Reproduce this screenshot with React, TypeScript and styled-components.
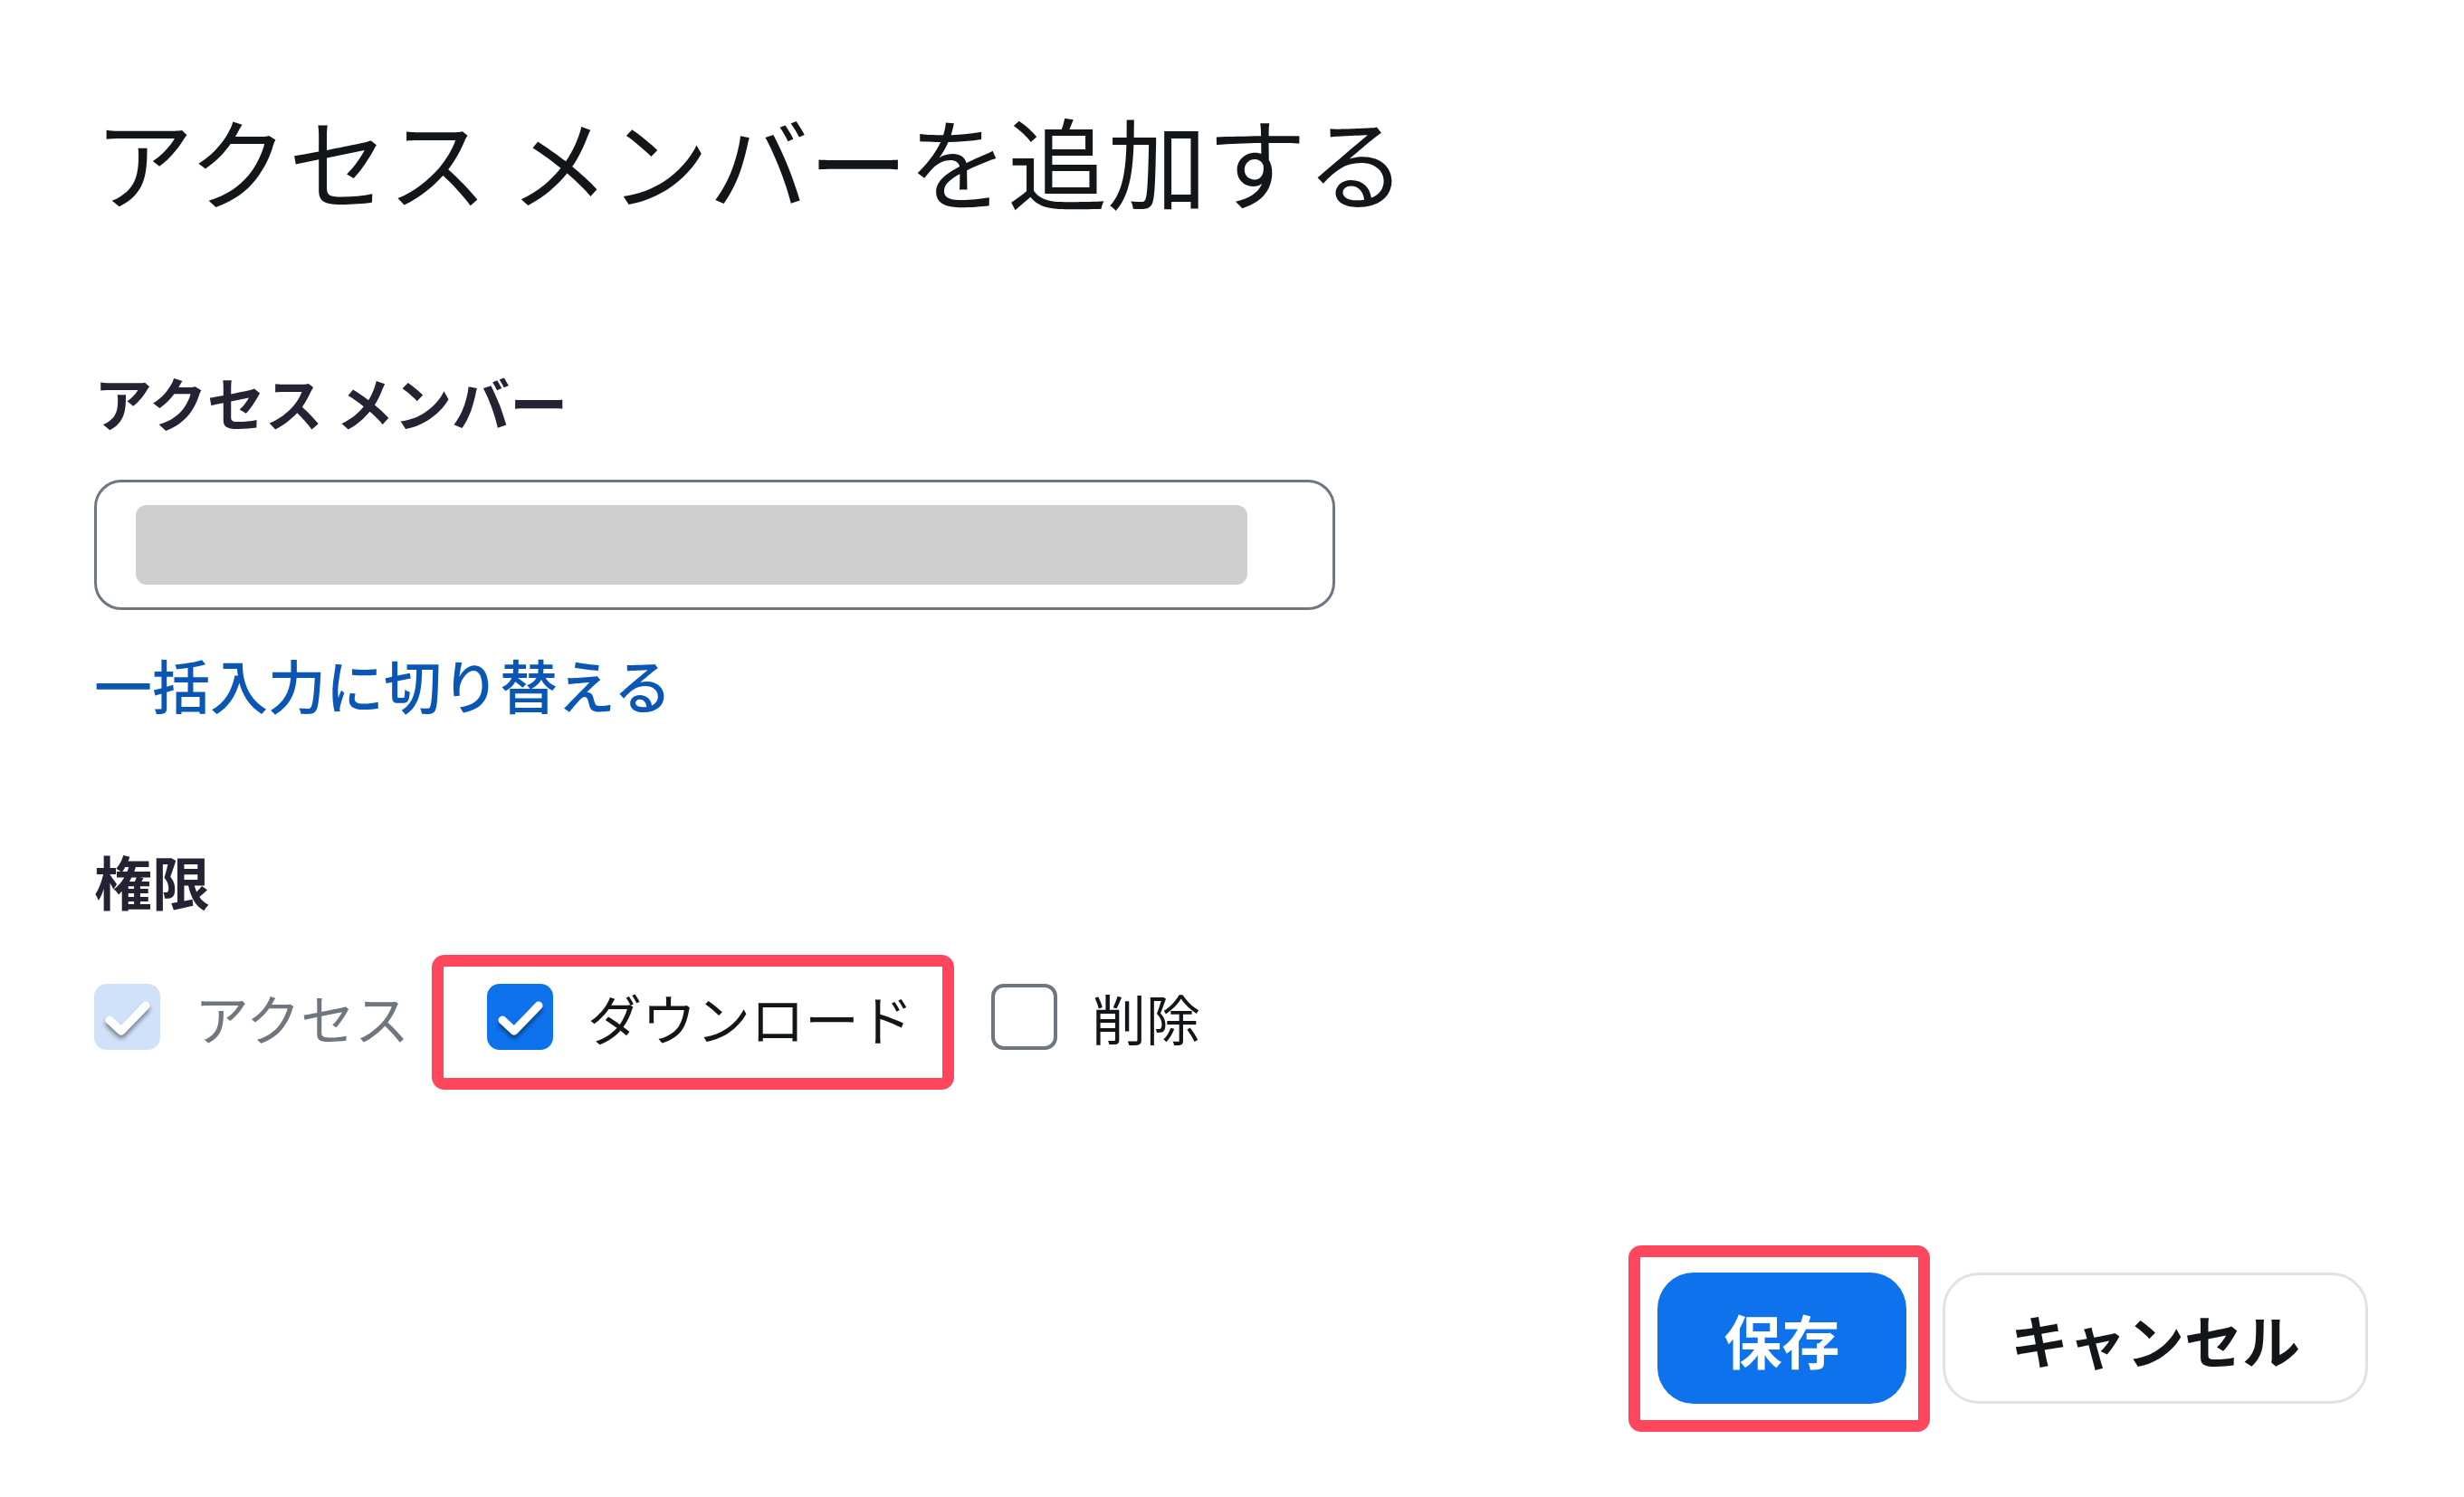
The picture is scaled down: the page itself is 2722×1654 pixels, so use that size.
import React from "react";
import styled, { createGlobalStyle } from "styled-components";

const GlobalStyle = createGlobalStyle`
  html, body {
    margin: 0;
    padding: 0;
    background: #ffffff;
  }
  body {
    font-family: "Noto Sans CJK JP", "Noto Sans", sans-serif;
    color: #131619;
  }
`;

const Page = styled.main`
  width: 2722px;
  min-height: 1654px;
  box-sizing: border-box;
  padding: 110px 106px 0 104px;
  display: flex;
  flex-direction: column;
`;

const Title = styled.h1`
  margin: 0;
  font-size: 110px;
  font-weight: 400;
  line-height: 1.2;
  color: #131619;
  white-space: nowrap;
`;

const SectionLabel = styled.h2<{ $top: number }>`
  margin: ${(p) => p.$top}px 0 0;
  font-size: 64px;
  font-weight: 700;
  line-height: 1.2;
  color: #232333;
`;

const InputBox = styled.div`
  margin-top: 48px;
  width: 1371px;
  height: 144px;
  box-sizing: border-box;
  border: 3px solid #6e7680;
  border-radius: 30px;
  padding: 25px 94px 0 43px;
  background: #ffffff;
`;

const Redacted = styled.div`
  height: 88px;
  border-radius: 12px;
  background: #d0cfd0;
`;

const SwitchLink = styled.a`
  margin-top: 43px;
  align-self: flex-start;
  font-size: 64px;
  font-weight: 500;
  line-height: 1.2;
  color: #0956b5;
  text-decoration: none;
  cursor: pointer;
`;

const Options = styled.div`
  margin-top: 77px;
  display: flex;
  align-items: center;
  gap: 86px;
`;

const Option = styled.label`
  display: flex;
  align-items: center;
  gap: 38px;
  cursor: pointer;
`;

type BoxState = "disabled" | "checked" | "unchecked";

const Box = styled.span<{ $state: BoxState }>`
  width: 73px;
  height: 73px;
  box-sizing: border-box;
  border-radius: 14px;
  display: flex;
  align-items: center;
  justify-content: center;
  flex-shrink: 0;
  background: ${(p) =>
    p.$state === "checked" ? "#0e72ed" : p.$state === "disabled" ? "#d0e2fa" : "#ffffff"};
  border: ${(p) => (p.$state === "unchecked" ? "4px solid #6e7680" : "none")};
`;

const OptionText = styled.span<{ $muted?: boolean }>`
  font-size: 60px;
  font-weight: 400;
  line-height: 1.2;
  color: ${(p) => (p.$muted ? "#6e7680" : "#131619")};
  white-space: nowrap;
`;

const Annotated = styled.span<{ $t: number; $r: number; $b: number; $l: number }>`
  position: relative;
  display: inline-flex;
  &::after {
    content: "";
    position: absolute;
    top: ${(p) => p.$t}px;
    right: ${(p) => p.$r}px;
    bottom: ${(p) => p.$b}px;
    left: ${(p) => p.$l}px;
    border: 13px solid #fe475d;
    border-radius: 14px;
    pointer-events: none;
  }
`;

const Actions = styled.div`
  margin-top: 246px;
  display: flex;
  justify-content: flex-end;
  align-items: center;
  gap: 40px;
`;

const Button = styled.button<{ $primary?: boolean }>`
  height: 145px;
  box-sizing: border-box;
  border-radius: 40px;
  font-family: "Noto Sans CJK JP", "Noto Sans", sans-serif;
  font-size: 64px;
  font-weight: 700;
  line-height: 1;
  cursor: pointer;
  display: flex;
  align-items: center;
  justify-content: center;
  width: ${(p) => (p.$primary ? "275px" : "470px")};
  background: ${(p) => (p.$primary ? "#0e72ed" : "#ffffff")};
  color: ${(p) => (p.$primary ? "#ffffff" : "#131619")};
  border: ${(p) => (p.$primary ? "none" : "3px solid #dfe3e8")};
`;

const Check = () => (
  <svg width="73" height="73" viewBox="0 0 73 73" aria-hidden="true">
    <defs>
      <filter id="chk-shadow" x="-30%" y="-30%" width="160%" height="180%">
        <feDropShadow dx="0" dy="4" stdDeviation="2.5" floodColor="#000" floodOpacity="0.45" />
      </filter>
    </defs>
    <polyline
      points="17,40 30,52 57,24"
      fill="none"
      stroke="#ffffff"
      strokeWidth="9"
      strokeLinecap="round"
      strokeLinejoin="round"
      filter="url(#chk-shadow)"
    />
  </svg>
);

const CheckOption: React.FC<{ state: BoxState; label: string; muted?: boolean }> = ({
  state,
  label,
  muted,
}) => (
  <Option>
    <Box $state={state}>{state !== "unchecked" && <Check />}</Box>
    <OptionText $muted={muted}>{label}</OptionText>
  </Option>
);

export default function App() {
  return (
    <>
      <GlobalStyle />
      <Page>
        <Title>アクセス メンバーを追加する</Title>

        <SectionLabel $top={163}>アクセス メンバー</SectionLabel>
        <InputBox>
          <Redacted />
        </InputBox>
        <SwitchLink>一括入力に切り替える</SwitchLink>

        <SectionLabel $top={140}>権限</SectionLabel>
        <Options>
          <CheckOption state="disabled" label="アクセス" muted />
          <Annotated $t={-32} $r={-45} $b={-44} $l={-61}>
            <CheckOption state="checked" label="ダウンロード" />
          </Annotated>
          <CheckOption state="unchecked" label="削除" />
        </Options>

        <Actions>
          <Annotated $t={-30} $r={-26} $b={-31} $l={-32}>
            <Button $primary>保存</Button>
          </Annotated>
          <Button>キャンセル</Button>
        </Actions>
      </Page>
    </>
  );
}
